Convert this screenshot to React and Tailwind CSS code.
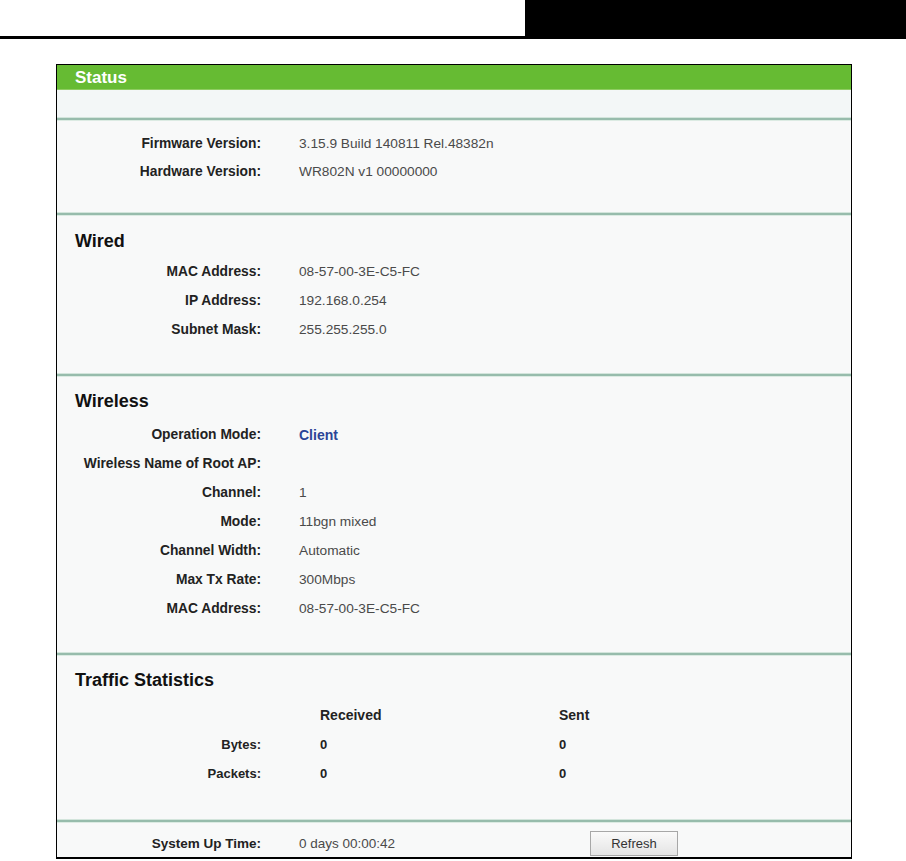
import React from "react";

const Sep = () => (
  <div className="h-[4px] border-t border-b border-t-[#d3e5dc] border-b-[#dcebe3] bg-[#97bcac]" />
);

const Row = ({ label, children, h = "h-[29px]" }) => (
  <div className={`flex items-center ${h}`}>
    <div className="w-[204px] text-right font-bold text-[13.8px] text-[#222]">{label}</div>
    <div className="ml-[38px] text-[13.7px] text-[#4a4a4a]">{children}</div>
  </div>
);

const Heading = ({ children }) => (
  <div className="h-[24px] flex items-center pl-[18px] font-bold text-[18px] text-[#111]">{children}</div>
);

export default function App() {
  return (
    <div className="w-[906px] h-[861px] bg-white overflow-hidden font-['Liberation_Sans',Arial,sans-serif]">
      <div className="flex h-[36px]">
        <div className="w-[525px]" />
        <div className="flex-1 bg-black" />
      </div>
      <div className="h-[3px] bg-black" />

      <div className="mt-[25px] ml-[56px] w-[796px] border border-black border-b-2 bg-[#f8f9f9]">
        <div className="h-[25px] bg-[#66bb33] border-b border-b-[#8fcc62] flex items-center pl-[18px]">
          <span className="text-white font-bold text-[17px] leading-none">Status</span>
        </div>
        <div className="h-[27px] bg-[#f3f7f7]" />
        <Sep />

        <div className="h-[91px] pt-[9px]">
          <Row label="Firmware Version:" h="h-[28px]">3.15.9 Build 140811 Rel.48382n</Row>
          <Row label="Hardware Version:" h="h-[28px]">WR802N v1 00000000</Row>
        </div>
        <Sep />

        <div className="h-[157px] pt-[13px]">
          <Heading>Wired</Heading>
          <div className="mt-[5px]">
            <Row label="MAC Address:">08-57-00-3E-C5-FC</Row>
            <Row label="IP Address:">192.168.0.254</Row>
            <Row label="Subnet Mask:">255.255.255.0</Row>
          </div>
        </div>
        <Sep />

        <div className="h-[275px] pt-[12px]">
          <Heading>Wireless</Heading>
          <div className="mt-[8px]">
            <Row label="Operation Mode:">
              <span className="text-[14px] font-bold text-[#2b4597]">Client</span>
            </Row>
            <Row label="Wireless Name of Root AP:"></Row>
            <Row label="Channel:">1</Row>
            <Row label="Mode:">11bgn mixed</Row>
            <Row label="Channel Width:">Automatic</Row>
            <Row label="Max Tx Rate:">300Mbps</Row>
            <Row label="MAC Address:">08-57-00-3E-C5-FC</Row>
          </div>
        </div>
        <Sep />

        <div className="h-[163px] pt-[12px]">
          <Heading>Traffic Statistics</Heading>
          <div className="mt-[9px]">
            {[
              ["", "Received", "Sent"],
              ["Bytes:", "0", "0"],
              ["Packets:", "0", "0"],
            ].map(([l, a, b], i) => (
              <div key={i} className="flex items-center h-[29px] text-[13px] font-bold text-[#222]">
                <div className="w-[204px] text-right">{l}</div>
                <div className={`ml-[59px] w-[239px] ${i === 0 ? "text-[14px]" : ""}`}>{a}</div>
                <div className={i === 0 ? "text-[14px]" : ""}>{b}</div>
              </div>
            ))}
          </div>
        </div>
        <Sep />

        <div className="h-[34px] pt-[8px]">
          <div className="flex items-center h-[25px]">
            <div className="w-[204px] text-right font-bold text-[13.5px] text-[#222] pt-[2px]">System Up Time:</div>
            <div className="ml-[38px] w-[291px] text-[13.5px] text-[#4a4a4a] pt-[2px]">0 days 00:00:42</div>
            <button className="w-[88px] h-[25px] border border-[#a7a7a7] bg-gradient-to-b from-[#fafafa] to-[#e4e4e4] text-[13px] text-[#333]">
              Refresh
            </button>
          </div>
        </div>
      </div>
    </div>
  );
}
